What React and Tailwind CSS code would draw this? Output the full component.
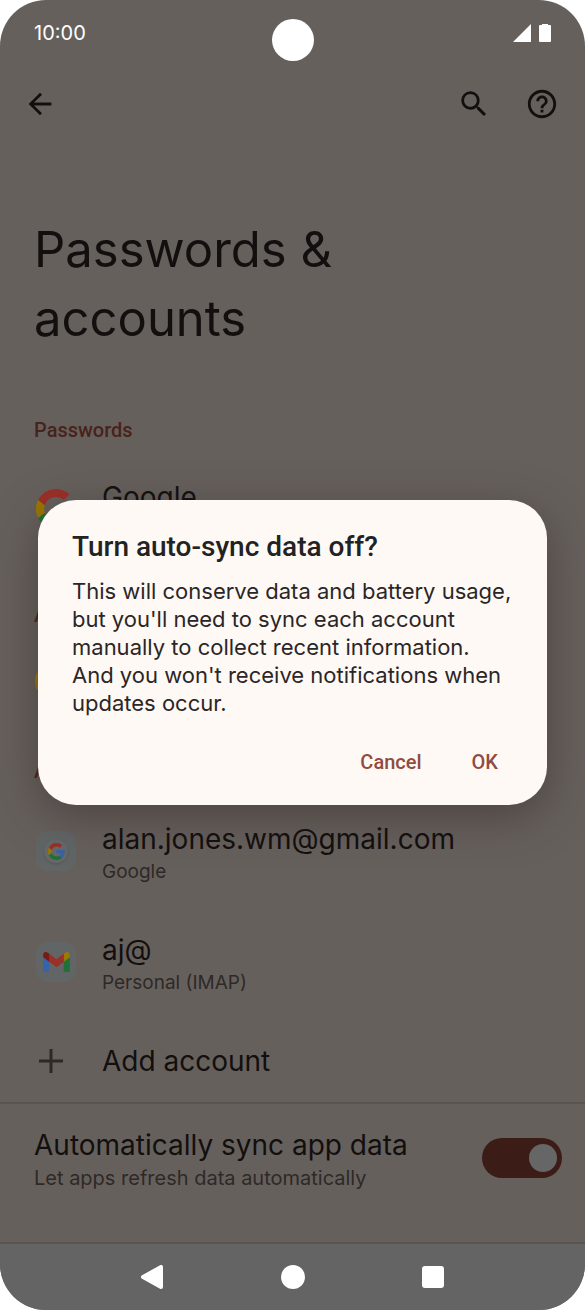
import React, { useState } from 'react';
import { MdArrowBack, MdSearch, MdHelpOutline } from 'react-icons/md';

function GoogleMark({ className }) {
    return (
        <svg viewBox="1 1 22 22" className={className} aria-hidden="true">
            <path fill="#3763a8" d="M22.56 12.25c0-.78-.07-1.53-.2-2.25H12v4.26h5.92c-.26 1.37-1.04 2.53-2.21 3.31v2.77h3.57c2.08-1.92 3.28-4.74 3.28-8.09z" />
            <path fill="#217038" d="M12 23c2.97 0 5.46-.98 7.28-2.66l-3.57-2.77c-.98.66-2.23 1.06-3.71 1.06-2.86 0-5.29-1.93-6.16-4.53H2.18v2.84C3.99 20.53 7.7 23 12 23z" />
            <path fill="#9d7700" d="M5.84 14.09c-.22-.66-.35-1.36-.35-2.09s.13-1.43.35-2.09V7.07H2.18C1.43 8.55 1 10.22 1 12s.43 3.45 1.18 4.93l3.66-2.84z" />
            <path fill="#9b3028" d="M12 5.38c1.62 0 3.06.56 4.21 1.64l3.15-3.15C17.45 2.09 14.97 1 12 1 7.7 1 3.99 3.47 2.18 7.07l3.66 2.84c.87-2.6 3.3-4.53 6.16-4.53z" />
        </svg>
    );
}

function GmailMark() {
    return (
        <svg viewBox="52 42 88 66" className="h-5 w-[27px]" aria-hidden="true">
            <path fill="#3763a8" d="M58 108h14V74L52 59v43c0 3.32 2.69 6 6 6" />
            <path fill="#217038" d="M120 108h14c3.32 0 6-2.69 6-6V59l-20 15" />
            <path fill="#9d7700" d="M120 48v26l20-15v-8c0-7.42-8.47-11.65-14.4-7.2" />
            <path fill="#9b3028" d="M72 74V48l24 18 24-18v26L96 92" />
            <path fill="#7a1a14" d="M52 51v8l20 15V48l-5.6-4.2c-5.94-4.45-14.4-.22-14.4 7.2" />
        </svg>
    );
}

function Tile({ children }) {
    return <div className="flex size-10 items-center justify-center rounded-xl bg-[#616566]">{children}</div>;
}

function StatusBar() {
    return (
        <div className="flex h-16 items-center justify-between pt-px pr-[34px] pl-[34px] text-white">
            <span className="text-xl">10:00</span>
            <div className="flex items-center gap-2">
                <svg viewBox="0 0 18 18" className="size-[18px]" fill="currentColor" aria-hidden="true">
                    <path d="M18 0v18H0z" />
                </svg>
                <svg viewBox="0 0 12 18" className="h-[18px] w-3" fill="currentColor" aria-hidden="true">
                    <path d="M3 0h6v1h2a1 1 0 0 1 1 1v15a1 1 0 0 1-1 1H1a1 1 0 0 1-1-1V2a1 1 0 0 1 1-1h2z" />
                </svg>
            </div>
        </div>
    );
}

function SectionLabel({ children, className }) {
    return (
        <h2 className={`px-[34px] font-[Roboto,sans-serif] text-xl leading-7 font-medium text-[#47231c] ${className}`}>
            {children}
        </h2>
    );
}

function Row({ icon, title, subtitle, className }) {
    return (
        <div className={`flex items-start gap-[26px] px-[36px] ${className}`}>
            <div className="mt-[10px] w-10 shrink-0">{icon}</div>
            <div className="min-w-0">
                <div className="text-[28px] leading-9 text-[#120f0e]">{title}</div>
                {subtitle && <div className="text-[19px] leading-[30px] text-[#2e2927]">{subtitle}</div>}
            </div>
        </div>
    );
}

function SyncDialog() {
    return (
        <div className="absolute inset-0 flex items-center justify-center px-[38px] pb-[5px]">
            <div
                role="dialog"
                aria-modal="true"
                aria-labelledby="dialog-title"
                className="w-full rounded-[38px] bg-[#fff9f6] pt-[29px] pb-[29px] pl-[34px] pr-[30px] shadow-[0_12px_44px_rgba(50,40,38,0.5)]"
            >
                <h2 id="dialog-title" className="font-[Roboto,sans-serif] text-[28px] leading-9 font-medium text-[#222]">
                    Turn auto-sync data off?
                </h2>
                <p className="mt-3 text-[22px] leading-7 text-[#2b2626]">
                    This will conserve data and battery usage, but you'll need to sync each account manually to collect
                    recent information. And you won't receive notifications when updates occur.
                </p>
                <div className="mt-[31px] flex justify-end gap-[50px] pr-[19px] font-[Roboto,sans-serif] text-xl leading-7 font-medium text-[#8f4c3f]">
                    <button type="button">Cancel</button>
                    <button type="button">OK</button>
                </div>
            </div>
        </div>
    );
}

export default function App() {
    const [autoSync, setAutoSync] = useState(true);

    return (
        <div className="min-h-screen bg-white font-[Inter,sans-serif]">
            <div className="relative flex min-h-screen flex-col overflow-hidden rounded-[46px] bg-[#66605d]">
                <StatusBar />
                {/* Camera cutout */}
                <div className="absolute top-[19px] left-1/2 size-[42px] -translate-x-1/2 rounded-full bg-white" />

                <header className="flex h-20 items-center justify-between pr-[26px] pl-[23px] text-[#120f0e]">
                    <button type="button" aria-label="Back">
                        <MdArrowBack size={34} />
                    </button>
                    <div className="flex items-center gap-[34px]">
                        <button type="button" aria-label="Search">
                            <MdSearch size={34} />
                        </button>
                        <button type="button" aria-label="Help">
                            <MdHelpOutline size={34} />
                        </button>
                    </div>
                </header>

                <main className="flex flex-1 flex-col">
                    <h1 className="mt-[71px] max-w-[420px] pl-[34px] text-[49px] leading-[69px] text-[#120f0e]">
                        Passwords & accounts
                    </h1>

                    <SectionLabel className="mt-[63px]">Passwords</SectionLabel>
                    <Row className="mt-[35px]" icon={<GoogleMark className="size-10" />} title="Google" />

                    <SectionLabel className="mt-[72px]">A</SectionLabel>
                    <div className="mt-8 px-[35px]">
                        <GoogleMark className="size-10" />
                    </div>

                    <SectionLabel className="mt-[56px]">A</SectionLabel>
                    <Row
                        className="mt-9"
                        icon={
                            <Tile>
                                <div className="flex size-6 items-center justify-center rounded-full bg-[#666869] shadow-sm">
                                    <GoogleMark className="size-[17px]" />
                                </div>
                            </Tile>
                        }
                        title="alan.jones.wm@gmail.com"
                        subtitle="Google"
                    />
                    <Row
                        className="mt-[45px]"
                        icon={
                            <Tile>
                                <GmailMark />
                            </Tile>
                        }
                        title="aj@"
                        subtitle="Personal (IMAP)"
                    />
                    <button type="button" className="mt-[45px] flex items-center gap-[39px] px-[39px] text-left">
                        <svg viewBox="0 0 24 24" className="size-6" fill="none" stroke="#2e2927" strokeWidth="3" aria-hidden="true">
                            <path d="M12 0v24M0 12h24" />
                        </svg>
                        <span className="text-[28px] leading-9 text-[#120f0e]">Add account</span>
                    </button>

                    <label className="mt-[23px] flex flex-1 cursor-pointer items-start justify-between border-y-2 border-[#5a5350] pt-[23px] pr-[23px] pb-[47px] pl-[34px]">
                        <span>
                            <span className="block text-[28px] leading-9 text-[#120f0e]">Automatically sync app data</span>
                            <span className="block text-xl leading-[30px] text-[#2e2927]">
                                Let apps refresh data automatically
                            </span>
                        </span>
                        <input
                            type="checkbox"
                            role="switch"
                            className="peer sr-only"
                            checked={autoSync}
                            onChange={e => setAutoSync(e.target.checked)}
                        />
                        <span className="mt-[11px] flex h-10 w-20 shrink-0 items-center justify-start rounded-full bg-[#3b1c17] px-[5px] peer-checked:justify-end">
                            <span className="size-7 rounded-full bg-[#666]" />
                        </span>
                    </label>
                </main>

                <SyncDialog />

                <nav className="relative grid h-[66px] grid-cols-[1fr_auto_1fr] items-center gap-[117px] bg-[#646464] text-white">
                    <button type="button" aria-label="Back" className="justify-self-end">
                        <svg viewBox="0 0 24 24" className="size-6" fill="currentColor" stroke="currentColor" strokeWidth="4" strokeLinejoin="round" aria-hidden="true">
                            <path d="M3 12L21 2v20z" />
                        </svg>
                    </button>
                    <button type="button" aria-label="Home" className="size-6 rounded-full bg-white" />
                    <button type="button" aria-label="Recent apps" className="size-[22px] rounded-[3px] bg-white" />
                </nav>
            </div>
        </div>
    );
}
